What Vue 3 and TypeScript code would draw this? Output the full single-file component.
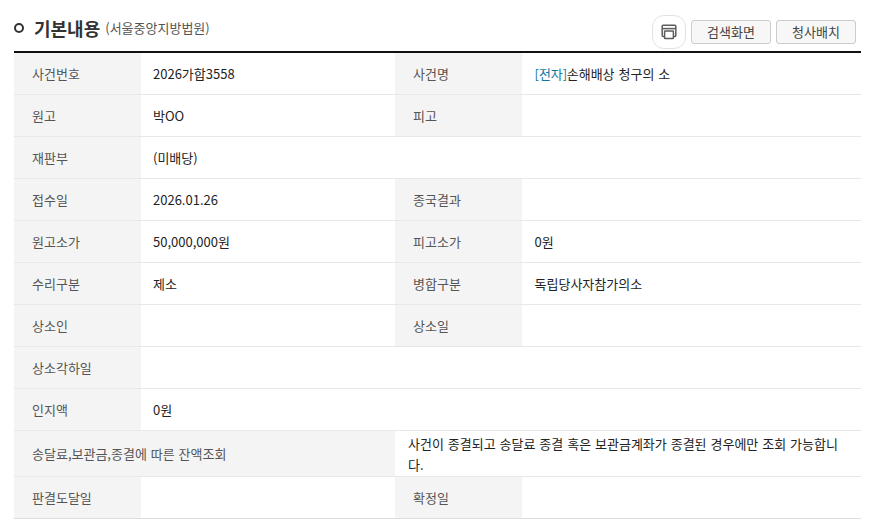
<script setup lang="ts">
interface Cell { th: string; td?: string; tag?: string; span?: boolean }
const rows: { left: Cell; right?: Cell }[] = [
  { left: { th: '사건번호', td: '2026가합3558' }, right: { th: '사건명', tag: '[전자]', td: '손해배상 청구의 소' } },
  { left: { th: '원고', td: '박OO' }, right: { th: '피고' } },
  { left: { th: '재판부', td: '(미배당)', span: true } },
  { left: { th: '접수일', td: '2026.01.26' }, right: { th: '종국결과' } },
  { left: { th: '원고소가', td: '50,000,000원' }, right: { th: '피고소가', td: '0원' } },
  { left: { th: '수리구분', td: '제소' }, right: { th: '병합구분', td: '독립당사자참가의소' } },
  { left: { th: '상소인' }, right: { th: '상소일' } },
  { left: { th: '상소각하일', span: true } },
  { left: { th: '인지액', td: '0원', span: true } },
]
</script>

<template>
  <div class="page">
    <header class="head">
      <div class="title">
        <span class="dot"></span>
        <h2>기본내용</h2>
        <span class="court">(서울중앙지방법원)</span>
      </div>
      <div class="actions">
        <button class="icon-btn" aria-label="인쇄">
          <svg width="16" height="16" viewBox="0 0 16 16" fill="none" stroke="#5c5c5c" stroke-width="1.5">
            <path d="M3.2 12.4H2.2a1 1 0 0 1-1-1V2.2a1 1 0 0 1 1-1h11.6a1 1 0 0 1 1 1v9.2a1 1 0 0 1-1 1h-1" />
            <path d="M1.2 4.6h13.6" />
            <rect x="3.6" y="7" width="8.8" height="7.6" rx="0.6" />
          </svg>
        </button>
        <button class="btn">검색화면</button>
        <button class="btn">청사배치</button>
      </div>
    </header>
    <table>
      <colgroup>
        <col class="c1" /><col class="c2" /><col class="c3" /><col />
      </colgroup>
      <tbody>
        <tr v-for="row in rows" :key="row.left.th">
          <th>{{ row.left.th }}</th>
          <td :colspan="row.left.span ? 3 : 1">{{ row.left.td }}</td>
          <template v-if="row.right">
            <th>{{ row.right.th }}</th>
            <td class="right"><span v-if="row.right.tag" class="tag">{{ row.right.tag }}</span>{{ row.right.td }}</td>
          </template>
        </tr>
        <tr>
          <th colspan="2">송달료,보관금,종결에 따른 잔액조회</th>
          <td colspan="2" class="note">사건이 종결되고 송달료 종결 혹은 보관금계좌가 종결된 경우에만 조회 가능합니다.</td>
        </tr>
        <tr>
          <th>판결도달일</th>
          <td></td>
          <th>확정일</th>
          <td></td>
        </tr>
      </tbody>
    </table>
  </div>
</template>

<style>
html, body { background: #fff; }
</style>

<style scoped>
.page {
  width: 873px;
  height: 527px;
  box-sizing: border-box;
  padding: 14px 12px 0 14px;
  font-family: "Noto Sans CJK KR", "Noto Sans", sans-serif;
  font-size: 13px;
  word-spacing: 1px;
  color: #222;
  overflow: hidden;
}
.head {
  display: flex;
  align-items: center;
  justify-content: space-between;
  height: 35px;
  padding-right: 5px;
}
.title {
  display: flex;
  align-items: center;
  margin-bottom: 8px;
}
.dot {
  width: 10px;
  height: 10px;
  box-sizing: border-box;
  border: 2.5px solid #333;
  border-radius: 50%;
  margin-right: 10px;
}
h2 {
  margin: 0 5px 0 0;
  font-size: 18px;
  font-weight: 700;
  line-height: 28px;
  color: #333;
}
.court {
  font-size: 13px;
  color: #555;
}
.actions {
  display: flex;
  align-items: center;
  gap: 5px;
}
.icon-btn {
  width: 34px;
  height: 34px;
  padding: 0;
  display: flex;
  align-items: center;
  justify-content: center;
  background: #fff;
  border: 1px solid #e2e2e2;
  border-radius: 12px;
}
.btn {
  width: 80px;
  height: 24px;
  padding: 0;
  background: #f7f7f7;
  border: 1px solid #ccc;
  border-radius: 3px;
  font: inherit;
  color: #444;
}
table {
  width: 847px;
  margin-top: 2px;
  border-collapse: separate;
  border-spacing: 0;
  table-layout: fixed;
  border-top: 2px solid #111;
}
.c1, .c3 { width: 127px; }
.c2 { width: 254px; }
th, td {
  height: 41px;
  padding: 0 12px;
  box-sizing: content-box;
  border-bottom: 1px solid #e8e8e8;
  font-weight: 400;
  line-height: 22px;
  text-align: left;
}
tr:last-child th, tr:last-child td { border-bottom-color: #ddd; }
th {
  padding-left: 18px;
  padding-right: 0;
  background: #f4f4f4;
  color: #555;
}
td.right { padding-left: 12.5px; }
td.note { height: 45px; line-height: 21px; padding-left: 13px; }
.tag { color: #12789f; margin-right: -0.5px; }
</style>
